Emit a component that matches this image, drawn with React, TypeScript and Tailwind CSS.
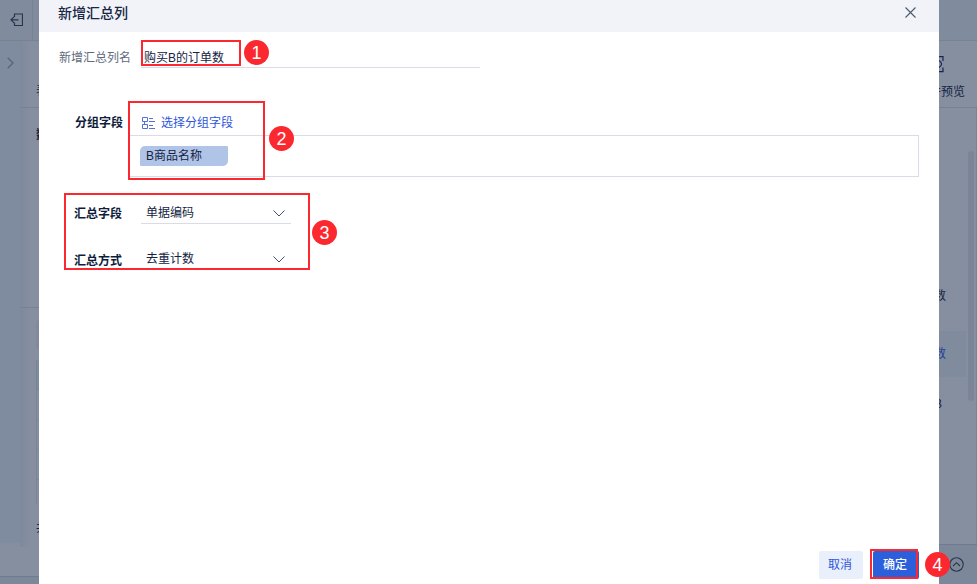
import { useState } from 'react';
import clsx from 'clsx';

type Mark = {
  no: number;
  box: string;
  badge: string;
};

const marks: Mark[] = [
  { no: 1, box: 'left-[141px] top-[40px] w-[100px] h-[26px]', badge: 'left-[244px] top-[40px]' },
  { no: 2, box: 'left-[128px] top-[101px] w-[137px] h-[79px]', badge: 'left-[269px] top-[126px]' },
  { no: 3, box: 'left-[64px] top-[193px] w-[246px] h-[77px]', badge: 'left-[312px] top-[220px]' },
  { no: 4, box: 'left-[870px] top-[549px] w-[48px] h-[30px]', badge: 'left-[925px] top-[552px]' },
];

function ChevronDown() {
  return (
    <svg width="12" height="7" viewBox="0 0 12 7" fill="none" stroke="#45506b">
      <path d="M0.5 0.5L6 6L11.5 0.5" />
    </svg>
  );
}

function GroupIcon() {
  return (
    <svg width="13" height="12" viewBox="0 0 13 12" fill="none" stroke="#5570dc">
      <path d="M0.5 0.5h5v4h-5zM0.5 7.5h5v4h-5zM2.5 4.5v3M7 1.5h4M7 4.5h6M7 8.5h4M7 11.5h6" />
    </svg>
  );
}

type SelectRowProps = {
  label: string;
  value: string;
  className?: string;
  labelClassName?: string;
};

function SelectRow({ label, value, className, labelClassName }: SelectRowProps) {
  return (
    <div className={clsx('flex', className)}>
      <span className={clsx('w-[67px] font-bold leading-[18px] text-[#0f1d3d]', labelClassName)}>{label}</span>
      <button
        type="button"
        className="flex h-[29px] w-[150px] items-start justify-between border-b border-[#dadbe4] pl-[5px] pr-[6px] pt-[9px]"
      >
        <span className="leading-[18px]">{value}</span>
        <span className="pt-[6px]">
          <ChevronDown />
        </span>
      </button>
    </div>
  );
}

function LeftStrip() {
  return (
    <aside className="flex w-[39px] shrink-0 flex-col overflow-hidden bg-[#868fa0]">
      <div className="flex h-[41px] shrink-0 border-b border-[#768397] bg-[#808b9e]">
        <div className="flex w-[33px] items-center border-r border-[#768397] pl-[10px]">
          <svg width="13" height="14" viewBox="0 0 13 14" fill="none" stroke="#27364c" strokeWidth="1.2">
            <path d="M4.5 4V1H12.5V12.5H4.5V9.5M8.5 6.8H1M4 3.8L1 6.8L4 9.8" />
          </svg>
        </div>
      </div>
      <div className="flex h-[535px] shrink-0">
        <div className="h-[502px] w-5 shrink-0 bg-[#7f8b9e] pl-[7px] pt-4">
          <svg width="7" height="12" viewBox="0 0 7 12" fill="none" stroke="#56657b" strokeWidth="1.3">
            <path d="M0.7 0.7L6 6L0.7 11.3" />
          </svg>
        </div>
        <div className="relative w-[19px] shrink-0 overflow-hidden whitespace-nowrap">
          <div className="absolute left-0 top-0 h-[506px] w-[10px] bg-linear-to-r from-[#7e899c] to-[#868fa0]" />
          <div className="relative h-[67px] border-b border-[#768397] pl-4 pt-[41px] leading-[18px]">表</div>
          <div className="relative h-[200px] border-b border-[#768397] pl-4 pt-[18px] font-bold leading-[18px]">数</div>
          <div className="relative ml-4 mt-[12px] h-[29px] w-5 rounded-sm bg-[#7f8a9c]" />
          <div className="relative ml-4 mt-[11px] w-5 border-l border-[#788498]">
            <div className="h-[30px] border-b border-[#768397] bg-[#7f8a9c]" />
            <div className="h-[30px] border-b border-[#7a8699]" />
            <div className="h-[30px] border-b border-[#7a8699]" />
            <div className="h-[30px] border-b border-[#7a8699]" />
            <div className="h-[24px]" />
          </div>
          <div className="relative pl-4 pt-[15px] leading-[18px]">共</div>
        </div>
      </div>
      <div className="grow border-t border-[#6e7c92] bg-[#7c879a]" />
    </aside>
  );
}

function RightStrip() {
  return (
    <aside className="flex w-[38px] shrink-0 flex-col overflow-hidden bg-[#868fa0]">
      <div className="h-[41px] shrink-0 border-b border-[#768397] bg-[#808b9e]" />
      <div className="flex h-[67px] shrink-0 flex-col border-b border-[#768397] pt-[15px]">
        <svg width="5" height="17" viewBox="0 0 5 17" fill="none" stroke="#142653" strokeWidth="1.2">
          <path d="M0 0.6H4V5M0 4.5Q2.4 6 2.6 8Q2.4 10 0 11.5M4 11.5V15.6H0" />
        </svg>
        <span className="ml-[-10px] mt-[10px] whitespace-nowrap leading-[18px] text-[#142342]">件预览</span>
      </div>
      <div className="flex h-[436px] shrink-0 border-r border-[#788498]">
        <div className="w-[27px] shrink-0 overflow-hidden">
          <div className="ml-[-5px] mt-[179px] leading-[18px]">数</div>
          <div className="mt-[26px] h-[46px] bg-[#808b9d] pt-[14px]">
            <div className="ml-[-5px] leading-[18px] text-[#213e9a]">数</div>
          </div>
          <div className="ml-[-5px] mt-[18px] leading-[18px]">B</div>
        </div>
        <div className="ml-[2px] mt-[43px] h-[250px] w-[6px] shrink-0 rounded-full bg-[#7a8698]" />
      </div>
      <div className="flex grow items-center border-t border-[#6e7c92] bg-[#7c879a] pl-[10px]">
        <svg width="15" height="15" viewBox="0 0 15 15" fill="none" stroke="#27364c" strokeWidth="1.1">
          <circle cx="7.5" cy="7.5" r="6.7" />
          <path d="M4 9L7.5 5.7L11 9" />
        </svg>
      </div>
    </aside>
  );
}

export default function App() {
  const [name, setName] = useState('购买B的订单数');

  return (
    <div className="relative flex h-[584px] w-[977px] overflow-hidden font-['Liberation_Sans','Noto_Sans_CJK_SC',sans-serif] text-[12px] text-[#142342]">
      <LeftStrip />

      <main className="flex w-[900px] shrink-0 flex-col bg-white">
        <header className="flex h-8 shrink-0 items-start justify-between bg-[#f2f3f8] pl-[19px] pr-[23px]">
          <h1 className="pt-[3px] text-[14px] font-medium leading-5 text-[#172746]">新增汇总列</h1>
          <button type="button" className="pt-[7px]" aria-label="关闭">
            <svg width="11" height="11" viewBox="0 0 11 11" fill="none" stroke="#4b596e" strokeWidth="1.1">
              <path d="M0.5 0.5L10.5 10.5M10.5 0.5L0.5 10.5" />
            </svg>
          </button>
        </header>

        <div className="flex h-9 shrink-0 pl-[20px]">
          <label className="w-[82px] pt-[17px] leading-[18px] text-[#5f6b80]">新增汇总列名</label>
          <input
            className="h-9 w-[339px] border-b border-[#dadbe4] pl-[3px] pt-[14px] leading-[18px] outline-none"
            value={name}
            onChange={(e) => setName(e.target.value)}
          />
        </div>

        <section className="mt-[38px] flex pl-[36px]">
          <span className="w-[53px] pt-[8px] font-bold leading-[18px] text-[#0f1d3d]">分组字段</span>
          <div className="w-[791px]">
            <button type="button" className="flex h-[29px] items-center gap-[6px] pl-[14px] pt-[5px] text-[#2e56d9]">
              <GroupIcon />
              <span className="leading-[18px]">选择分组字段</span>
            </button>
            <div className="h-[42px] border border-[#dadbe4] pl-[11px] pt-[10px]">
              <div className="h-5 w-[88px] rounded-tl-[5px] rounded-br-[5px] rounded-tr-[1px] rounded-bl-[1px] bg-[#b0c4e8] pl-[6px] pt-px leading-[19px]">
                B商品名称
              </div>
            </div>
          </div>
        </section>

        <section className="mt-[18px] pl-[35px]">
          <SelectRow label="汇总字段" value="单据编码" labelClassName="pt-[10px]" />
          <SelectRow label="汇总方式" value="去重计数" className="mt-[17px]" labelClassName="pt-[11px]" />
        </section>

        <footer className="mt-auto flex justify-end gap-[10px] pb-[5px] pr-5">
          <button type="button" className="h-7 w-11 rounded-xs bg-[#e9effb] pr-0.5 text-[#2e56d9]">
            取消
          </button>
          <button type="button" className="h-7 w-[46px] rounded-xs bg-[#2c5fdb] pr-0.5 font-medium text-white">
            确定
          </button>
        </footer>
      </main>

      <RightStrip />

      {marks.map((mark) => (
        <div key={mark.no} className="pointer-events-none">
          <div className={clsx('absolute border-2 border-[#fc2830]', mark.box)} />
          <div
            className={clsx(
              'absolute flex size-[25px] items-center justify-center rounded-full bg-[#fc2830] pt-px text-[18px] leading-none text-white',
              mark.badge,
            )}
          >
            {mark.no}
          </div>
        </div>
      ))}
    </div>
  );
}
